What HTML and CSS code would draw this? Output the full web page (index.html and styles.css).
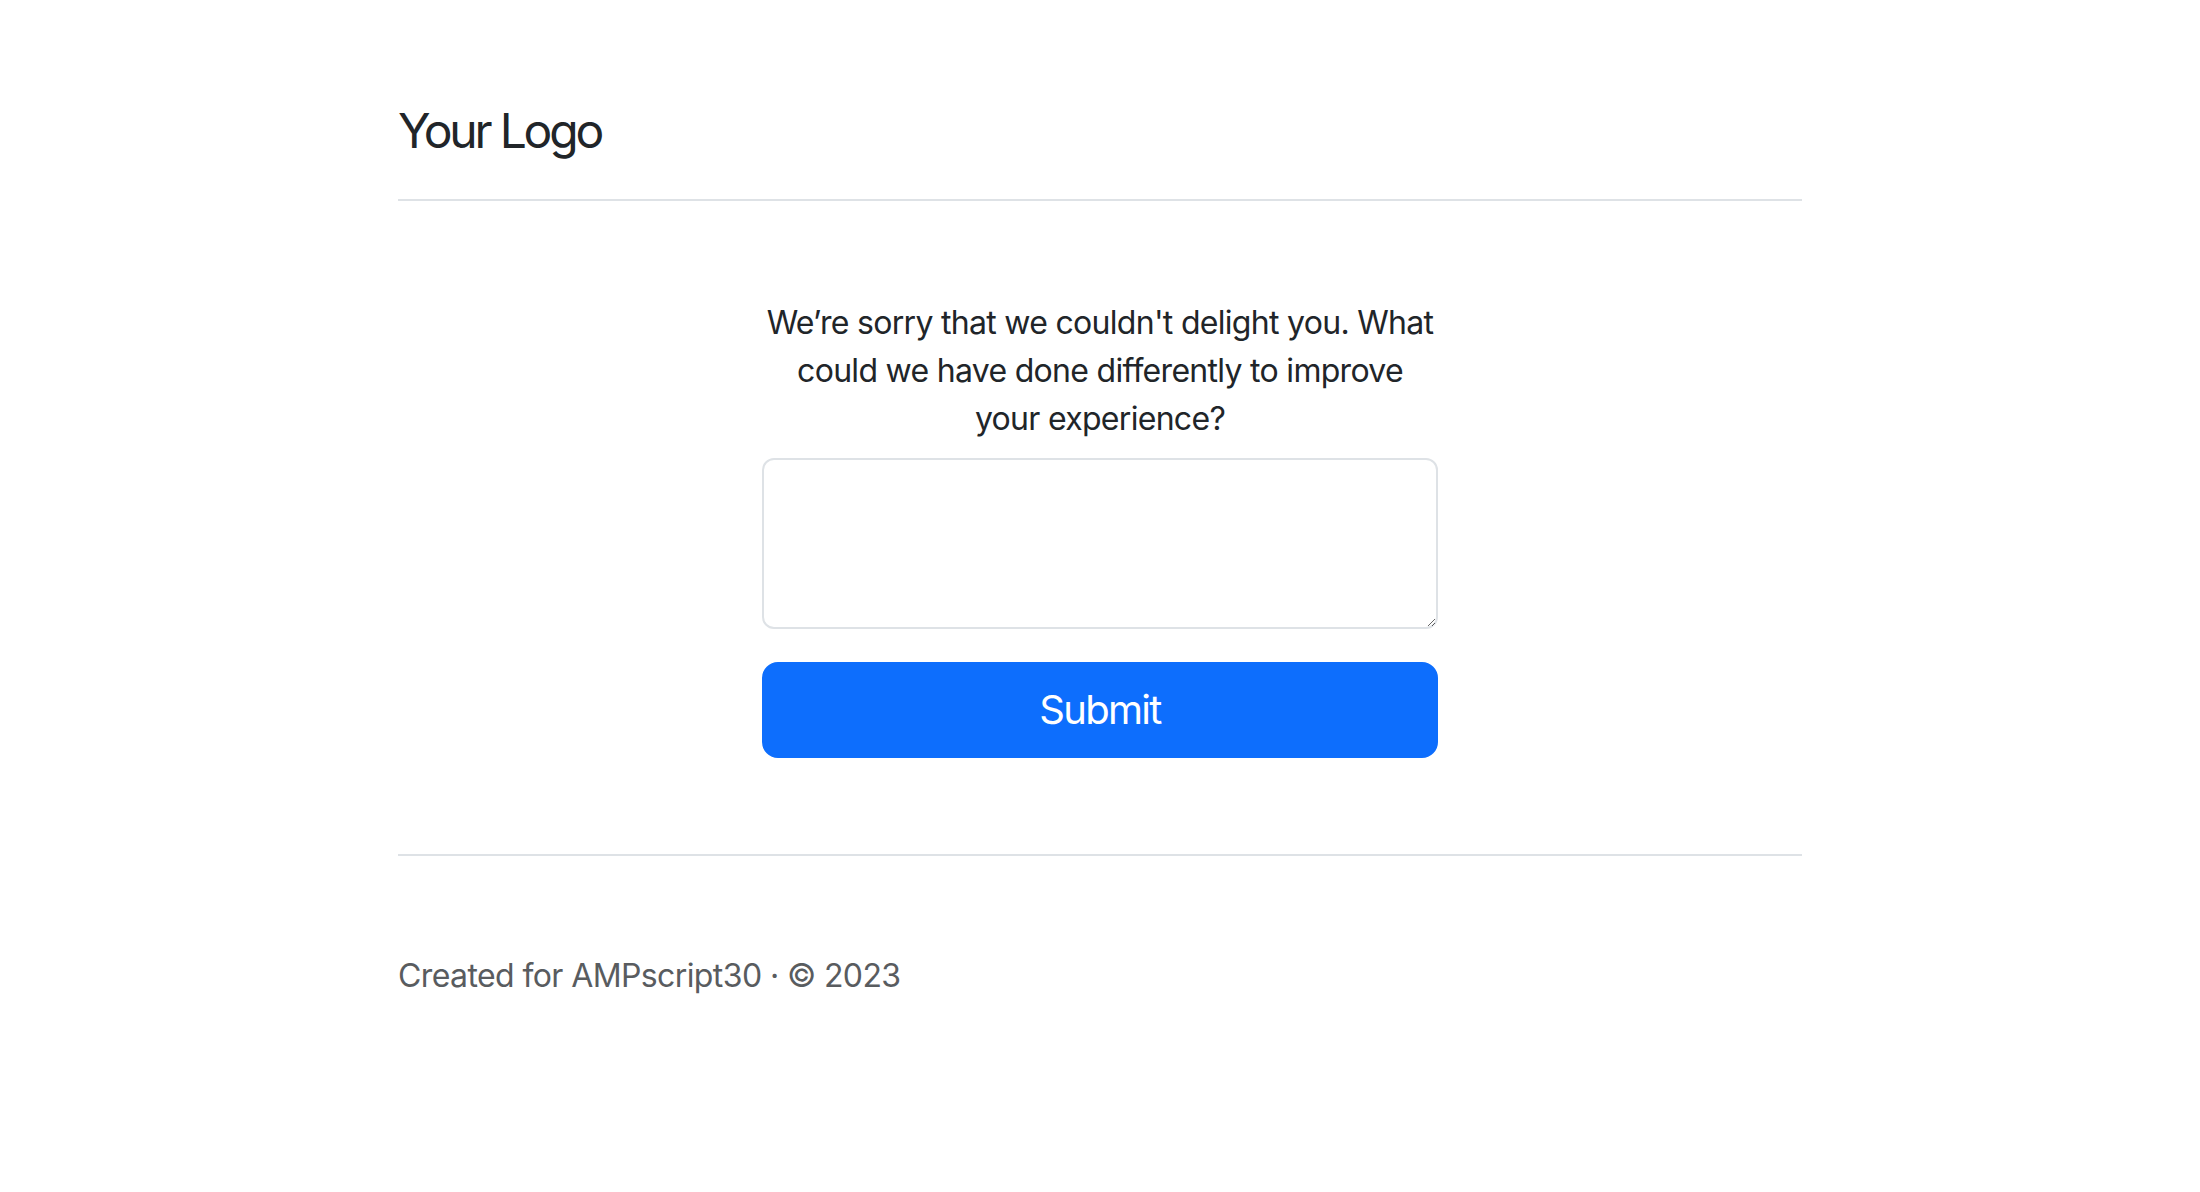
FILE: index.html
```html
<!DOCTYPE html>
<html lang="en">
<head>
<meta charset="utf-8">
<title>Feedback</title>
<link rel="stylesheet" href="styles.css">
</head>
<body>
<div class="container">
  <header class="site-header">
    <span class="logo">Your Logo</span>
  </header>
  <main class="main">
    <form class="feedback">
      <p class="question">We’re sorry that we couldn't delight you. What could we have done differently to improve your experience?</p>
      <textarea class="answer"></textarea>
      <button type="button" class="submit">Submit</button>
    </form>
  </main>
  <footer class="site-footer">
    <p class="credit">Created for AMPscript30 · © 2023</p>
  </footer>
</div>
</body>
</html>
```

FILE: styles.css
```css
html, body {
  margin: 0;
  padding: 0;
  background: #fff;
}
body {
  font-family: Inter, "Noto Sans", "Liberation Sans", sans-serif;
  color: #212529;
}
.container {
  width: 1404px;
  margin: 0 auto;
}
.site-header {
  padding: 102px 0 39px;
  border-bottom: 2px solid #dee2e6;
}
.logo {
  display: block;
  font-size: 48px;
  line-height: 58px;
  font-weight: 400;
  letter-spacing: -3.2px;
}
.main {
  padding: 98px 0 96px;
}
.feedback {
  width: 676px;
  margin: 0 auto;
  display: flex;
  flex-direction: column;
  text-align: center;
}
.question {
  margin: 0 0 15px;
  font-size: 32px;
  line-height: 48px;
  letter-spacing: -0.7px;
}
.answer {
  box-sizing: border-box;
  width: 100%;
  height: 171px;
  border: 2px solid #dee2e6;
  border-radius: 12px;
  resize: vertical;
  font: inherit;
  margin: 0 0 33px;
}
.submit {
  box-sizing: border-box;
  width: 100%;
  height: 96px;
  padding: 16px;
  background: #0d6efd;
  border: 2px solid #0d6efd;
  border-radius: 16px;
  color: #fff;
  font-family: inherit;
  font-size: 40px;
  line-height: 60px;
  letter-spacing: -1.7px;
}
.site-footer {
  border-top: 2px solid #dee2e6;
  padding: 96px 0;
}
.credit {
  margin: 0;
  font-size: 32px;
  line-height: 48px;
  letter-spacing: -0.6px;
  color: #595c5f;
}
```
